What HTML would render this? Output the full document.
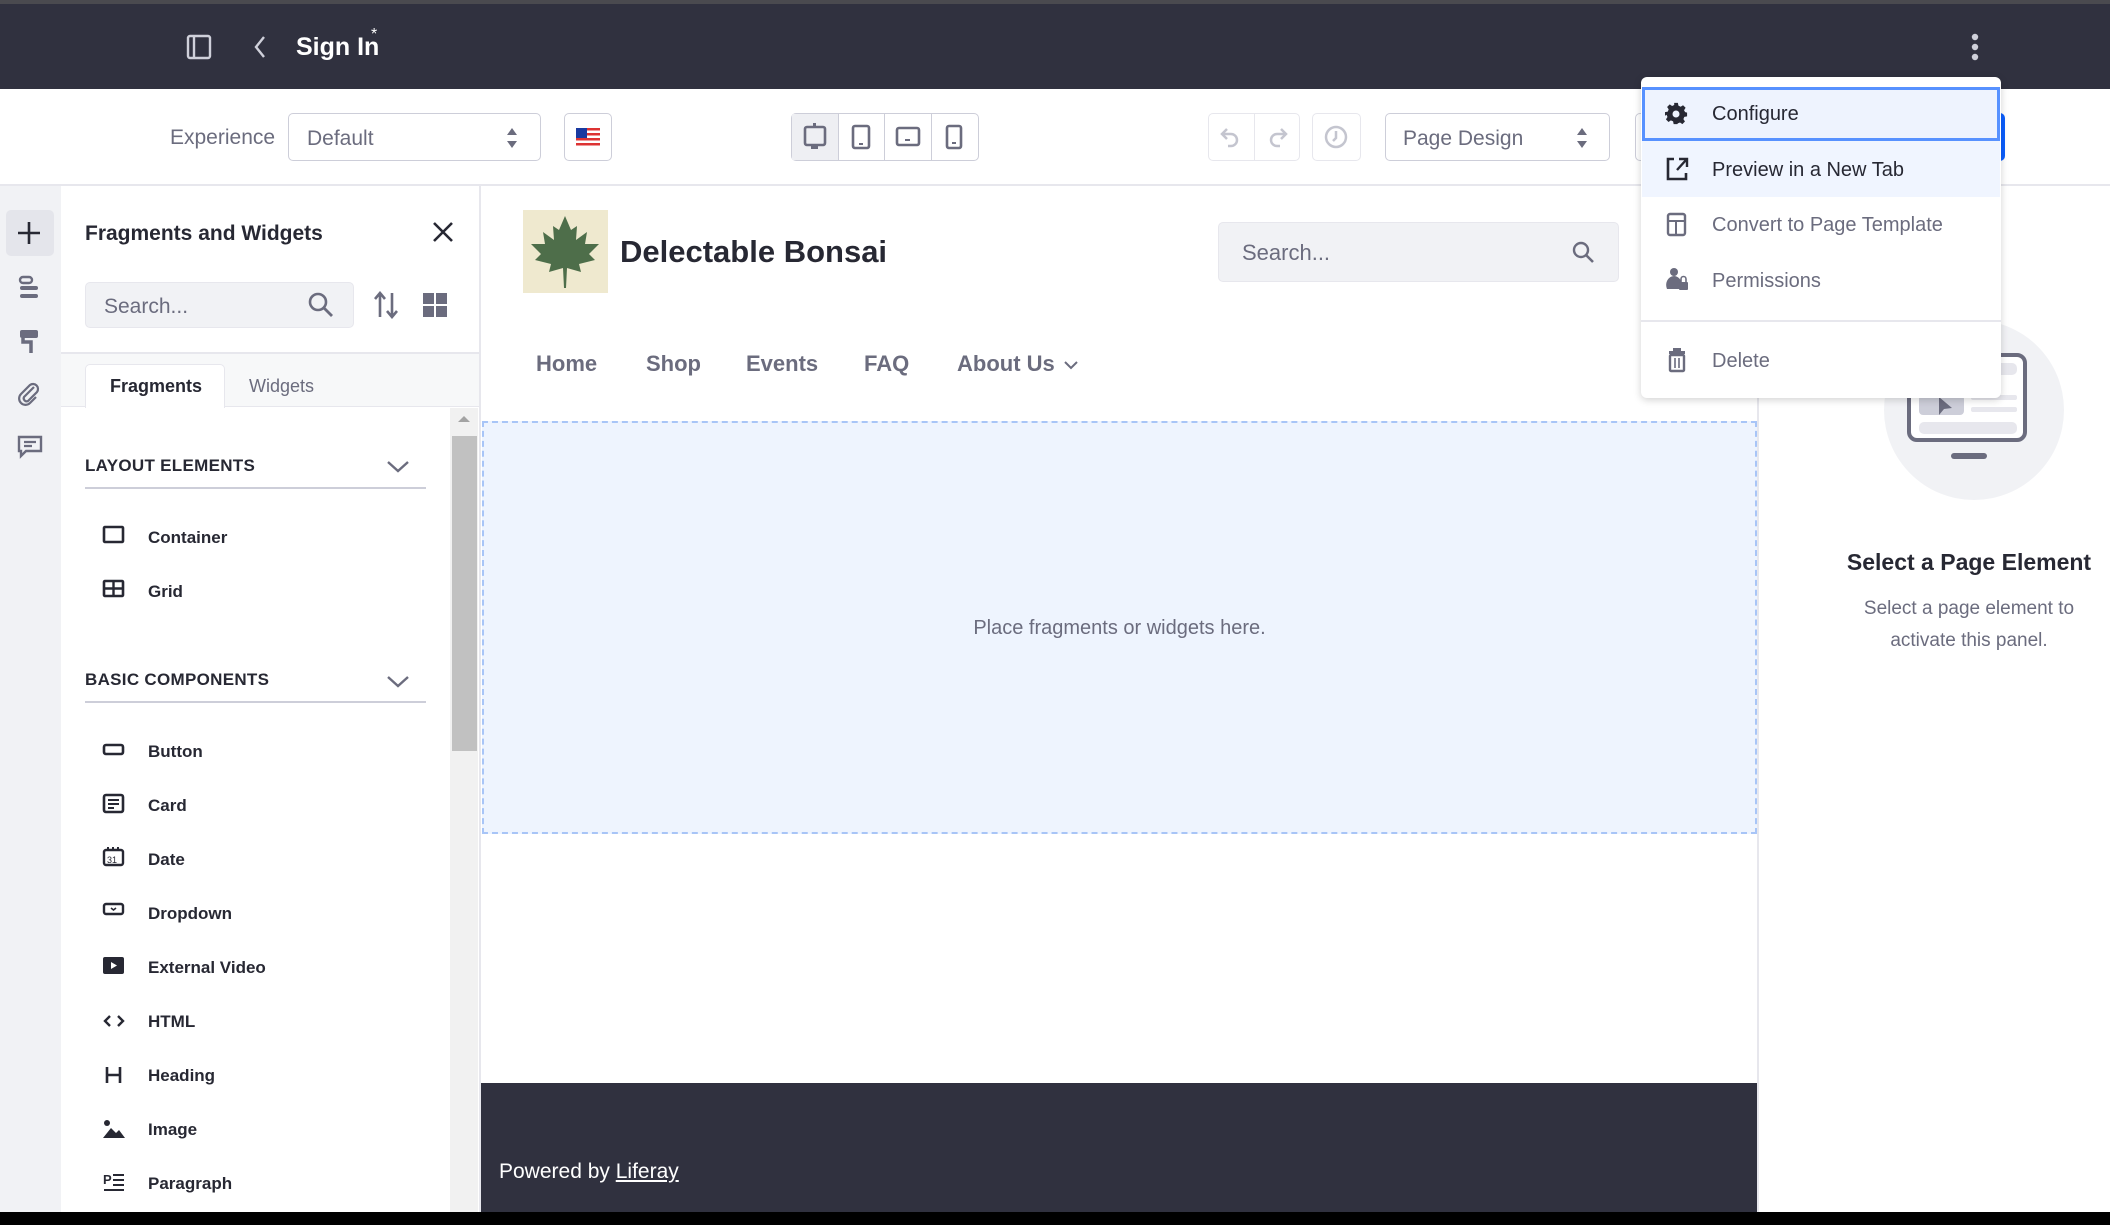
<!DOCTYPE html>
<html><head><meta charset="utf-8">
<style>
*{box-sizing:border-box;margin:0;padding:0}
body{width:2110px;height:1225px;overflow:hidden;background:#fff;font-family:"Liberation Sans",sans-serif;position:relative;color:#272833}
.a{position:absolute}
.t{position:absolute;white-space:nowrap}
.btn{position:absolute;border:1px solid #cdced9;border-radius:5px;background:#fff}
.ico{position:absolute}
</style></head><body>
<!-- top bar -->
<div class="a" style="left:0;top:0;width:2110px;height:89px;background:#30313f"></div>
<div class="a" style="left:0;top:0;width:2110px;height:4px;background:#4a4a4f"></div>
<svg class="ico" style="left:186px;top:34px" width="26" height="26" viewBox="0 0 26 26"><rect x="2" y="2" width="22" height="22" rx="2" fill="none" stroke="#cfd0da" stroke-width="2.4"/><line x1="8" y1="2" x2="8" y2="24" stroke="#cfd0da" stroke-width="2.4"/></svg>
<svg class="ico" style="left:252px;top:34px" width="16" height="26" viewBox="0 0 16 26"><path d="M12 3 L4 13 L12 23" fill="none" stroke="#cfd0da" stroke-width="2.4"/></svg>
<div class="t" style="left:296px;top:33px;font-size:25px;font-weight:bold;color:#fff">Sign In</div>
<div class="t" style="left:371px;top:26px;font-size:16px;color:#fff">*</div>
<svg class="ico" style="left:1970px;top:32px" width="10" height="30"><circle cx="5" cy="5" r="3.2" fill="#cfd0da"/><circle cx="5" cy="15" r="3.2" fill="#cfd0da"/><circle cx="5" cy="25" r="3.2" fill="#cfd0da"/></svg>

<!-- toolbar -->
<div class="a" style="left:0;top:184px;width:2110px;height:2px;background:#e7e7ed"></div>
<div class="t" style="left:170px;top:126px;font-size:21px;color:#6b6c7e">Experience</div>
<div class="btn" style="left:288px;top:113px;width:253px;height:48px"></div>
<div class="t" style="left:307px;top:127px;font-size:21px;color:#6b6c7e">Default</div>
<svg class="ico" style="left:505px;top:127px" width="14" height="22"><path d="M7 1 L12 8 H2Z M7 21 L12 14 H2Z" fill="#6b6c7e"/></svg>
<div class="btn" style="left:564px;top:113px;width:48px;height:48px"></div>
<svg class="ico" style="left:576px;top:128px" width="24" height="18"><rect width="24" height="18" fill="#fff"/><g fill="#d33"><rect y="0" width="24" height="2.5"/><rect y="5" width="24" height="2.5"/><rect y="10" width="24" height="2.5"/><rect y="15" width="24" height="2.5"/></g><rect width="11" height="10" fill="#1a3aa0"/></svg>
<div class="btn" style="left:791px;top:113px;width:188px;height:48px;background:#fff"></div>
<div class="a" style="left:792px;top:114px;width:46px;height:46px;background:#eeeff3"></div>
<div class="a" style="left:838px;top:114px;width:1px;height:46px;background:#cdced9"></div>
<div class="a" style="left:884px;top:114px;width:1px;height:46px;background:#cdced9"></div>
<div class="a" style="left:931px;top:114px;width:1px;height:46px;background:#cdced9"></div>
<svg class="ico" style="left:801px;top:122px" width="28" height="30"><rect x="4" y="5" width="20" height="18" rx="2" fill="none" stroke="#6b6c7e" stroke-width="2.6"/><rect x="12" y="1" width="3" height="4" fill="#6b6c7e"/><rect x="10" y="24" width="7" height="3" fill="#6b6c7e"/></svg>
<svg class="ico" style="left:850px;top:124px" width="22" height="26"><rect x="3" y="2" width="16" height="22" rx="2" fill="none" stroke="#6b6c7e" stroke-width="2.6"/><rect x="9" y="19" width="4" height="2" fill="#6b6c7e"/></svg>
<svg class="ico" style="left:895px;top:126px" width="26" height="22"><rect x="2" y="2" width="22" height="17" rx="2" fill="none" stroke="#6b6c7e" stroke-width="2.6"/><rect x="10" y="13" width="5" height="2" fill="#6b6c7e"/></svg>
<svg class="ico" style="left:944px;top:124px" width="20" height="26"><rect x="3" y="2" width="14" height="22" rx="2" fill="none" stroke="#6b6c7e" stroke-width="2.6"/><rect x="8" y="18" width="4" height="2" fill="#6b6c7e"/></svg>

<div class="btn" style="left:1208px;top:113px;width:92px;height:48px;border-color:#e7e7ed"></div>
<div class="a" style="left:1254px;top:114px;width:1px;height:46px;background:#e7e7ed"></div>
<svg class="ico" style="left:1218px;top:124px" width="26" height="26"><path d="M9 5 L4 10 L9 15 M4 10 H13 a6 6 0 0 1 0 12 H10" fill="none" stroke="#c4c5cf" stroke-width="2.5"/></svg>
<svg class="ico" style="left:1264px;top:124px" width="26" height="26"><path d="M17 5 L22 10 L17 15 M22 10 H13 a6 6 0 0 0 0 12 H16" fill="none" stroke="#c4c5cf" stroke-width="2.5"/></svg>
<div class="btn" style="left:1312px;top:113px;width:49px;height:48px;border-color:#e7e7ed"></div>
<svg class="ico" style="left:1323px;top:124px" width="26" height="26"><circle cx="13" cy="13" r="10" fill="none" stroke="#c4c5cf" stroke-width="2.5"/><path d="M13 7 V14 L10 17" fill="none" stroke="#c4c5cf" stroke-width="2.5"/></svg>
<div class="btn" style="left:1385px;top:113px;width:225px;height:48px"></div>
<div class="t" style="left:1403px;top:127px;font-size:21px;color:#6b6c7e">Page Design</div>
<svg class="ico" style="left:1575px;top:127px" width="14" height="22"><path d="M7 1 L12 8 H2Z M7 21 L12 14 H2Z" fill="#6b6c7e"/></svg>
<div class="btn" style="left:1635px;top:113px;width:40px;height:48px"></div>
<div class="a" style="left:1960px;top:113px;width:45px;height:48px;background:#0b5fff;border-radius:5px"></div>

<!-- left rail -->
<div class="a" style="left:0;top:186px;width:61px;height:1039px;background:#f1f2f5"></div>
<div class="a" style="left:6px;top:210px;width:48px;height:46px;background:#e4e5eb;border-radius:5px"></div>
<svg class="ico" style="left:16px;top:220px" width="26" height="26"><path d="M13 2 V24 M2 13 H24" stroke="#272833" stroke-width="2.6"/></svg>
<svg class="ico" style="left:17px;top:275px" width="24" height="26"><rect x="3" y="2" width="12" height="6" rx="3" fill="none" stroke="#6b6c7e" stroke-width="2.4"/><rect x="3" y="11" width="18" height="4" rx="2" fill="#6b6c7e"/><rect x="3" y="19" width="18" height="4" rx="2" fill="#6b6c7e"/></svg>
<svg class="ico" style="left:17px;top:328px" width="24" height="28"><rect x="3" y="2" width="18" height="8" rx="2" fill="#6b6c7e"/><path d="M6 10 V14 H14 V25" fill="none" stroke="#6b6c7e" stroke-width="3.5"/></svg>
<svg class="ico" style="left:16px;top:381px" width="26" height="26"><path d="M18 6 L8 16 a3 3 0 0 0 4 4 L21 11 a5 5 0 0 0 -7 -7 L5 13 a6 6 0 0 0 9 9 L20 16" fill="none" stroke="#6b6c7e" stroke-width="2.2"/></svg>
<svg class="ico" style="left:16px;top:434px" width="28" height="26"><path d="M3 3 H25 V17 H10 L5 22 V17 H3 Z" fill="none" stroke="#6b6c7e" stroke-width="2.4"/><path d="M8 8 H20 M8 12 H16" stroke="#6b6c7e" stroke-width="2.2"/></svg>

<!-- fragments panel -->
<div class="a" style="left:61px;top:186px;width:419px;height:1039px;background:#fff"></div>
<div class="t" style="left:85px;top:222px;font-size:21px;font-weight:bold;color:#272833">Fragments and Widgets</div>
<svg class="ico" style="left:431px;top:220px" width="24" height="24"><path d="M3 3 L21 21 M21 3 L3 21" stroke="#272833" stroke-width="2.6"/></svg>
<div class="a" style="left:85px;top:282px;width:269px;height:46px;background:#f1f2f5;border:1px solid #e7e7ed;border-radius:5px"></div>
<div class="t" style="left:104px;top:295px;font-size:21px;color:#6b6c7e">Search...</div>
<svg class="ico" style="left:307px;top:291px" width="28" height="28"><circle cx="11" cy="11" r="8" fill="none" stroke="#6b6c7e" stroke-width="2.6"/><path d="M17 17 L25 25" stroke="#6b6c7e" stroke-width="2.8"/></svg>
<svg class="ico" style="left:372px;top:291px" width="28" height="28"><path d="M8 26 V3 M3 8 L8 2 L13 8 M20 2 V25 M15 20 L20 26 L25 20" fill="none" stroke="#6b6c7e" stroke-width="2.6"/></svg>
<svg class="ico" style="left:422px;top:292px" width="26" height="26"><rect x="1" y="1" width="11" height="11" fill="#6b6c7e"/><rect x="14" y="1" width="11" height="11" fill="#6b6c7e"/><rect x="1" y="14" width="11" height="11" fill="#6b6c7e"/><rect x="14" y="14" width="11" height="11" fill="#6b6c7e"/></svg>
<div class="a" style="left:61px;top:352px;width:419px;height:55px;background:#f7f8f9;border-top:2px solid #e7e7ed;border-bottom:1px solid #e7e7ed"></div>
<div class="a" style="left:85px;top:364px;width:140px;height:44px;background:#fff;border:1px solid #e7e7ed;border-bottom:none;border-radius:5px 5px 0 0"></div>
<div class="t" style="left:110px;top:376px;font-size:18px;font-weight:bold;color:#272833">Fragments</div>
<div class="t" style="left:249px;top:376px;font-size:18px;color:#6b6c7e">Widgets</div>
<!-- scrollbar -->
<div class="a" style="left:450px;top:408px;width:28px;height:817px;background:#f1f1f1"></div>
<div class="a" style="left:452px;top:436px;width:25px;height:315px;background:#c1c1c1"></div>
<svg class="ico" style="left:457px;top:414px" width="14" height="10"><path d="M1 8 L7 2 L13 8Z" fill="#a3a3a3"/></svg>
<div class="a" style="left:479px;top:186px;width:2px;height:1039px;background:#e7e7ed"></div>

<div class="t" style="left:85px;top:456px;font-size:17px;font-weight:bold;color:#272833;letter-spacing:.3px">LAYOUT ELEMENTS</div>
<svg class="ico" style="left:386px;top:458px" width="24" height="16"><path d="M2 4 L12 13 L22 4" fill="none" stroke="#6b6c7e" stroke-width="2.4"/></svg>
<div class="a" style="left:85px;top:487px;width:341px;height:2px;background:#cdced9"></div>
<div class="t" style="left:148px;top:528px;font-size:17px;font-weight:bold">Container</div>
<div class="t" style="left:148px;top:582px;font-size:17px;font-weight:bold">Grid</div>
<svg class="ico" style="left:102px;top:525px" width="24" height="20"><rect x="2" y="2" width="19" height="15" rx="1" fill="none" stroke="#272833" stroke-width="2.6"/></svg>
<svg class="ico" style="left:102px;top:579px" width="24" height="20"><rect x="2" y="2" width="19" height="15" rx="1" fill="none" stroke="#272833" stroke-width="2.6"/><path d="M11.5 2 V17 M2 9.5 H21" stroke="#272833" stroke-width="2.4"/></svg>

<div class="t" style="left:85px;top:670px;font-size:17px;font-weight:bold;color:#272833;letter-spacing:.3px">BASIC COMPONENTS</div>
<svg class="ico" style="left:386px;top:673px" width="24" height="16"><path d="M2 4 L12 13 L22 4" fill="none" stroke="#6b6c7e" stroke-width="2.4"/></svg>
<div class="a" style="left:85px;top:701px;width:341px;height:2px;background:#cdced9"></div>

<div class="t" style="left:148px;top:742px;font-size:17px;font-weight:bold">Button</div>
<div class="t" style="left:148px;top:796px;font-size:17px;font-weight:bold">Card</div>
<div class="t" style="left:148px;top:850px;font-size:17px;font-weight:bold">Date</div>
<div class="t" style="left:148px;top:904px;font-size:17px;font-weight:bold">Dropdown</div>
<div class="t" style="left:148px;top:958px;font-size:17px;font-weight:bold">External Video</div>
<div class="t" style="left:148px;top:1012px;font-size:17px;font-weight:bold">HTML</div>
<div class="t" style="left:148px;top:1066px;font-size:17px;font-weight:bold">Heading</div>
<div class="t" style="left:148px;top:1120px;font-size:17px;font-weight:bold">Image</div>
<div class="t" style="left:148px;top:1174px;font-size:17px;font-weight:bold">Paragraph</div>
<svg class="ico" style="left:102px;top:742px" width="24" height="16"><rect x="2" y="3" width="19" height="9" rx="2" fill="none" stroke="#272833" stroke-width="2.6"/></svg>
<svg class="ico" style="left:102px;top:793px" width="24" height="22"><rect x="2" y="2" width="19" height="17" rx="2" fill="none" stroke="#272833" stroke-width="2.6"/><path d="M6 7 H17 M6 11 H17 M6 15 H12" stroke="#272833" stroke-width="2"/></svg>
<svg class="ico" style="left:102px;top:846px" width="24" height="22"><rect x="2" y="4" width="19" height="15" rx="2" fill="none" stroke="#272833" stroke-width="2.4"/><path d="M6 1 V5 M11 1 V5 M16 1 V5" stroke="#272833" stroke-width="2"/><text x="5" y="17" font-size="9" font-family="Liberation Sans" fill="#272833">31</text></svg>
<svg class="ico" style="left:102px;top:902px" width="24" height="16"><rect x="2" y="2" width="19" height="10" rx="2" fill="none" stroke="#272833" stroke-width="2.4"/><path d="M9 6 L11.5 8 L14 6" fill="none" stroke="#272833" stroke-width="1.6"/></svg>
<svg class="ico" style="left:102px;top:955px" width="24" height="22"><rect x="1" y="2" width="21" height="17" rx="2" fill="#272833"/><path d="M9 7 L15 10.5 L9 14Z" fill="#fff"/></svg>
<svg class="ico" style="left:102px;top:1013px" width="24" height="16"><path d="M8 3 L3 8 L8 13 M16 3 L21 8 L16 13" fill="none" stroke="#272833" stroke-width="2.4"/></svg>
<svg class="ico" style="left:102px;top:1065px" width="24" height="20"><path d="M5 2 V18 M18 2 V18 M5 10 H18" stroke="#272833" stroke-width="2.6"/></svg>
<svg class="ico" style="left:102px;top:1118px" width="24" height="22"><circle cx="5" cy="5" r="3" fill="#272833"/><path d="M1 20 L9 10 L14 15 L17 12 L23 20Z" fill="#272833"/></svg>
<svg class="ico" style="left:102px;top:1171px" width="24" height="22"><text x="1" y="13" font-size="13" font-weight="bold" font-family="Liberation Sans" fill="#272833">P</text><path d="M11 4 H22 M11 9 H22 M11 14 H22 M2 19 H22" stroke="#272833" stroke-width="2"/></svg>

<!-- canvas -->
<div class="a" style="left:523px;top:210px;width:85px;height:83px;background:#efe9cf"></div>
<svg class="ico" style="left:529px;top:214px" width="73" height="76" viewBox="0 0 73 76"><path d="M36 2 L42 16 L48 12 L47 26 L58 18 L56 30 L70 30 L60 40 L66 46 L50 50 L52 58 L38 54 L37 74 L35 74 L34 54 L20 58 L22 50 L6 46 L12 40 L2 30 L16 30 L14 18 L25 26 L24 12 L30 16Z" fill="#4e6e4a"/></svg>
<div class="t" style="left:620px;top:234px;font-size:31px;font-weight:bold;color:#272833">Delectable Bonsai</div>
<div class="a" style="left:1218px;top:222px;width:401px;height:60px;background:#f1f2f5;border:1px solid #e7e7ed;border-radius:5px"></div>
<div class="t" style="left:1242px;top:240px;font-size:22px;color:#6b6c7e">Search...</div>
<svg class="ico" style="left:1571px;top:240px" width="24" height="24"><circle cx="10" cy="10" r="7" fill="none" stroke="#6b6c7e" stroke-width="2.4"/><path d="M15 15 L22 22" stroke="#6b6c7e" stroke-width="2.6"/></svg>
<div class="t" style="left:536px;top:351px;font-size:22px;font-weight:bold;color:#6b6c7e">Home</div>
<div class="t" style="left:646px;top:351px;font-size:22px;font-weight:bold;color:#6b6c7e">Shop</div>
<div class="t" style="left:746px;top:351px;font-size:22px;font-weight:bold;color:#6b6c7e">Events</div>
<div class="t" style="left:864px;top:351px;font-size:22px;font-weight:bold;color:#6b6c7e">FAQ</div>
<div class="t" style="left:957px;top:351px;font-size:22px;font-weight:bold;color:#6b6c7e">About Us</div>
<svg class="ico" style="left:1063px;top:359px" width="16" height="12"><path d="M2 3 L8 9 L14 3" fill="none" stroke="#6b6c7e" stroke-width="2"/></svg>

<div class="a" style="left:482px;top:421px;width:1275px;height:413px;background:#eef4fe;border:2px dashed #a8c5f7"></div>
<div class="t" style="left:482px;top:617px;width:1275px;text-align:center;font-size:20px;color:#6b6c7e">Place fragments or widgets here.</div>

<div class="a" style="left:481px;top:1083px;width:1277px;height:130px;background:#30313f"></div>
<div class="t" style="left:499px;top:1160px;font-size:21px;color:#fff">Powered by <span style="text-decoration:underline">Liferay</span></div>
<div class="a" style="left:0;top:1212px;width:2110px;height:13px;background:#000"></div>

<!-- right panel -->
<div class="a" style="left:1757px;top:186px;width:2px;height:1026px;background:#e7e7ed"></div>
<svg class="ico" style="left:1879px;top:315px" width="190" height="190" viewBox="0 0 190 190"><circle cx="95" cy="95" r="90" fill="#f1f2f5"/><rect x="30" y="40" width="116" height="85" rx="8" fill="#fff" stroke="#6b6c7e" stroke-width="4"/><rect x="40" y="48" width="98" height="12" rx="5" fill="#e7e7ed"/><rect x="40" y="80" width="45" height="20" rx="4" fill="#cdced9"/><rect x="92" y="80" width="46" height="5" rx="2" fill="#e7e7ed"/><rect x="92" y="92" width="46" height="5" rx="2" fill="#e7e7ed"/><rect x="40" y="107" width="98" height="12" rx="5" fill="#e7e7ed"/><path d="M60 82 L60 100 L65 94 L73 93Z" fill="#6b6c7e"/><rect x="72" y="138" width="36" height="6" rx="3" fill="#6b6c7e"/></svg>
<div class="t" style="left:1793px;top:549px;width:352px;text-align:center;font-size:23px;font-weight:bold;color:#272833">Select a Page Element</div>
<div class="t" style="left:1793px;top:593px;width:352px;text-align:center;font-size:19px;color:#6b6c7e;line-height:32px">Select a page element to<br>activate this panel.</div>

<!-- dropdown menu -->
<div class="a" style="left:1641px;top:77px;width:360px;height:321px;background:#fff;border-radius:6px;box-shadow:0 2px 8px rgba(0,0,0,.18)"></div>
<div class="a" style="left:1642px;top:87px;width:358px;height:54px;background:#eef3fe;border:3px solid #5791ff"></div>
<div class="a" style="left:1642px;top:141px;width:358px;height:56px;background:#f0f5ff"></div>
<div class="a" style="left:1641px;top:320px;width:360px;height:2px;background:#e7e7ed"></div>
<svg class="ico" style="left:1665px;top:102px" width="24" height="24" viewBox="0 0 24 24"><path d="M10 1h4l.6 3 2.4 1.2 2.6-1.7 2.8 2.8-1.7 2.6L21.9 11l2.1.6v4l-3 .6-1 2.4 1.7 2.6-2.8 2.8-2.6-1.7-2.4 1L13.4 24h-4l-.6-3-2.4-1-2.6 1.7-2.8-2.8 1.7-2.6-1-2.4L0 15V11l3-.6 1-2.4L2.3 5.4 5.1 2.6 7.7 4.3 10 3.3Z" fill="#272833" transform="scale(0.92)"/><circle cx="11" cy="12" r="3.5" fill="#eef3fe"/></svg>
<div class="t" style="left:1712px;top:103px;font-size:20px;color:#272833">Configure</div>
<svg class="ico" style="left:1665px;top:156px" width="24" height="26"><path d="M9 3 H3 V23 H21 V17" fill="none" stroke="#272833" stroke-width="2.6"/><path d="M12 14 L21 4 M14 3 H22 V11" fill="none" stroke="#272833" stroke-width="2.4"/></svg>
<div class="t" style="left:1712px;top:159px;font-size:20px;color:#272833">Preview in a New Tab</div>
<svg class="ico" style="left:1666px;top:212px" width="22" height="26"><rect x="2" y="2" width="17" height="21" rx="2" fill="none" stroke="#6b6c7e" stroke-width="2.4"/><path d="M2 9 H19 M10 9 V23" stroke="#6b6c7e" stroke-width="2"/></svg>
<div class="t" style="left:1712px;top:214px;font-size:20px;color:#6b6c7e">Convert to Page Template</div>
<svg class="ico" style="left:1666px;top:267px" width="24" height="26"><circle cx="8" cy="5" r="4" fill="#6b6c7e"/><path d="M1 22 a7 8 0 0 1 14 -8 V22Z" fill="#6b6c7e"/><rect x="13" y="15" width="9" height="8" rx="1" fill="#6b6c7e"/><path d="M15 15 V12 a2.5 2.5 0 0 1 5 0 V15" fill="none" stroke="#6b6c7e" stroke-width="1.6"/></svg>
<div class="t" style="left:1712px;top:270px;font-size:20px;color:#6b6c7e">Permissions</div>
<svg class="ico" style="left:1667px;top:347px" width="20" height="26"><rect x="2" y="4" width="16" height="3" fill="#6b6c7e"/><rect x="6" y="1" width="8" height="3" fill="#6b6c7e"/><rect x="3" y="8" width="14" height="16" rx="1" fill="none" stroke="#6b6c7e" stroke-width="2.4"/><path d="M8 11 V21 M12 11 V21" stroke="#6b6c7e" stroke-width="1.6"/></svg>
<div class="t" style="left:1712px;top:350px;font-size:20px;color:#6b6c7e">Delete</div>
</body></html>
